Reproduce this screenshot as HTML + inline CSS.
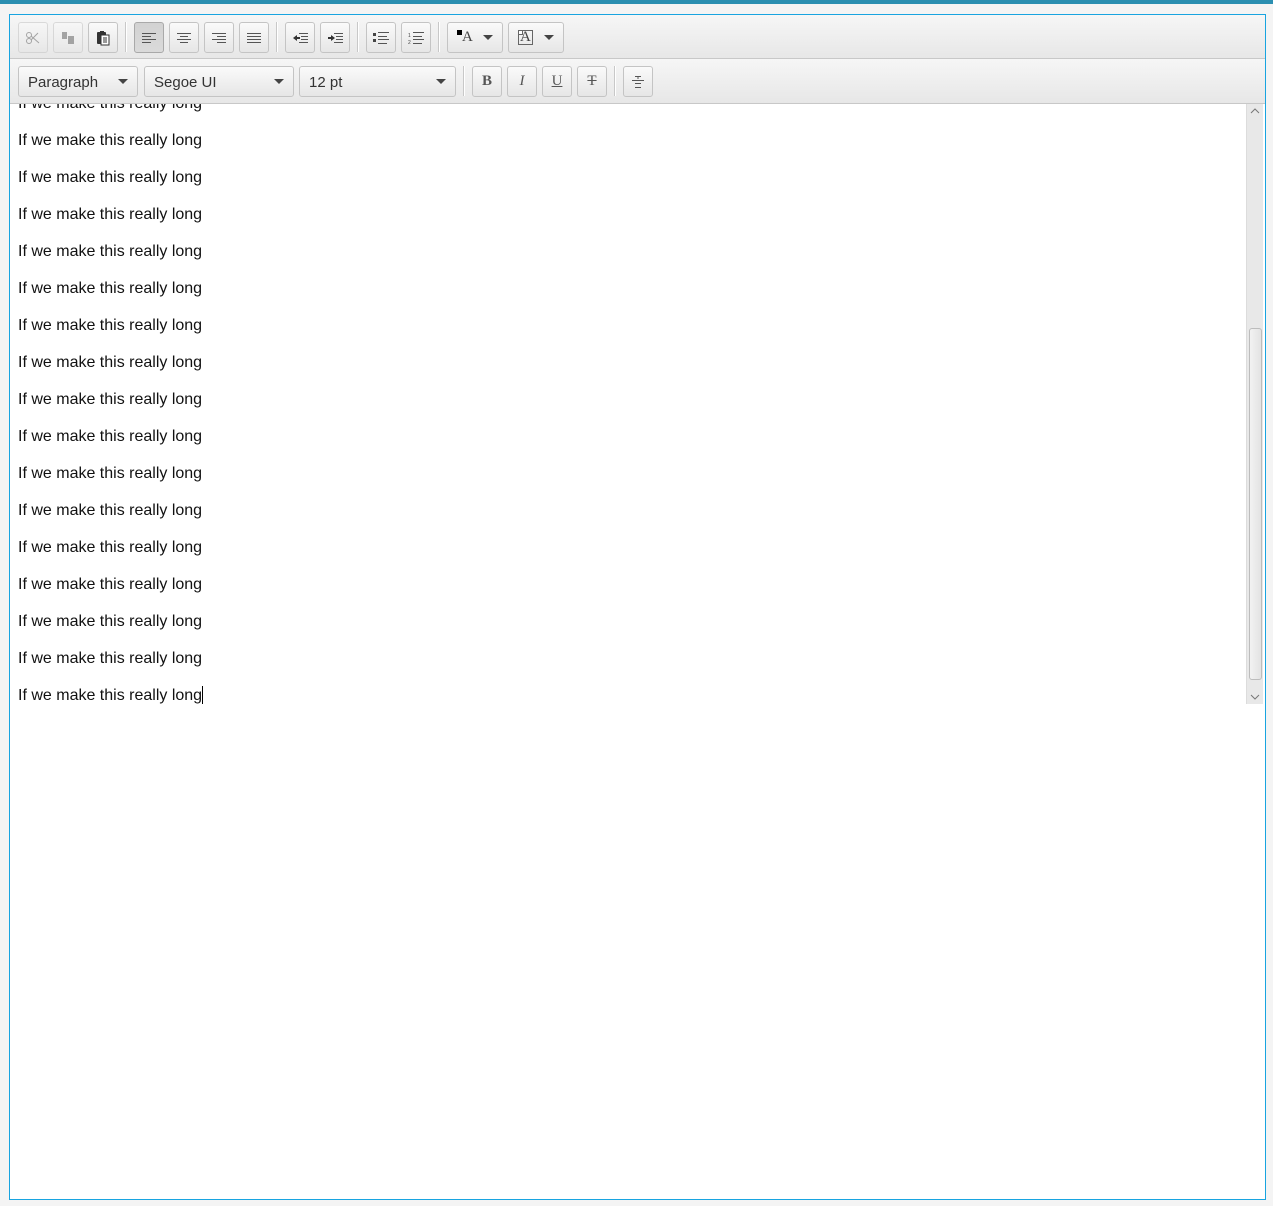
<!DOCTYPE html>
<html><head><style>
*{margin:0;padding:0;box-sizing:border-box}
body{width:1273px;height:1206px;background:#f4f4f4;position:relative;overflow:hidden;font-family:"Liberation Sans",sans-serif}
.top{position:absolute;left:0;top:0;width:1273px;height:4px;background:#2b8fb1}
.bg{position:absolute;left:9px;top:14px;width:1257px;height:1186px;background:#fff}
.frame{position:absolute;left:9px;top:14px;width:1257px;height:1186px;border:1px solid #18a4e0;z-index:10;pointer-events:none}
.tb{position:absolute;left:10px;width:1255px;background:linear-gradient(#f6f6f6,#e7e7e7);border-bottom:1px solid #c8c8c8}
.b{position:absolute;height:31px;border:1px solid #c4c4c4;border-radius:3px;background:linear-gradient(#fafafa,#e6e6e6);display:flex;align-items:center;justify-content:center;font-family:"Liberation Serif",serif;font-size:15px;color:#555}
.b.p{background:linear-gradient(#d2d2d2,#dadada);border-color:#a9a9a9}
.b.d{opacity:.55}
.sep{position:absolute;width:2px;height:30px;border-left:1px solid #c8c8c8;border-right:1px solid #fff}
.c{position:absolute;height:31px;border:1px solid #c4c4c4;border-radius:3px;background:linear-gradient(#fafafa,#e6e6e6);font-size:15px;color:#333;padding-left:9px;line-height:31px}
.arr{position:absolute;width:0;height:0;border-left:5px solid transparent;border-right:5px solid transparent;border-top:5px solid #444}
.c .arr{right:9px;top:12px}
.ln{position:absolute;left:8px;font-size:16px;color:#111;line-height:20px;white-space:nowrap}
.lines{position:absolute;left:10px;top:104px;width:1236px;height:600px;overflow:hidden}
.sb{position:absolute;left:1246px;top:104px;width:17px;height:600px;background:#e8e8e8;border-left:1px solid #dcdcdc}
.th{position:absolute;left:2px;top:224px;width:13px;height:352px;border:1px solid #bcbcbc;border-radius:3px;background:linear-gradient(90deg,#f2f2f2,#e3e3e3)}
</style></head><body>
<div class="top"></div>
<div class="bg"></div>
<div class="tb" style="top:15px;height:44px"></div>
<div class="tb" style="top:59px;height:45px"></div>

<div class="b d" style="left:18px;top:22px;width:30px"><svg width="16" height="14"><circle cx="4" cy="4" r="2.5" fill="none" stroke="#666"/><circle cx="4" cy="10" r="2.5" fill="none" stroke="#666"/><path d="M6 5L14 12M6 9L13 2" stroke="#666"/></svg></div>
<div class="b d" style="left:53px;top:22px;width:30px"><svg width="14" height="14"><rect x="1" y="1" width="5" height="7" fill="#666"/><rect x="7" y="5" width="6" height="8" fill="#666"/></svg></div>
<div class="b" style="left:88px;top:22px;width:30px"><svg width="14" height="16"><rect x="1" y="2" width="9" height="12" rx="1" fill="#333"/><rect x="4" y="1" width="4" height="3" fill="#333"/><rect x="5" y="5" width="8" height="10" fill="#fff" stroke="#333"/><path d="M7 8h4M7 10h4M7 12h4" stroke="#333"/></svg></div>
<div class="sep" style="left:125px;top:22px"></div>
<div class="b p" style="left:134px;top:22px;width:30px"><svg width="14" height="10"><path d="M0 .5h14M0 3.5h9M0 6.5h14M0 9.5h9" stroke="#555"/></svg></div>
<div class="b" style="left:169px;top:22px;width:30px"><svg width="14" height="10"><path d="M0 .5h14M3 3.5h8M0 6.5h14M3 9.5h8" stroke="#555"/></svg></div>
<div class="b" style="left:204px;top:22px;width:30px"><svg width="14" height="10"><path d="M0 .5h14M5 3.5h9M0 6.5h14M5 9.5h9" stroke="#555"/></svg></div>
<div class="b" style="left:239px;top:22px;width:30px"><svg width="14" height="10"><path d="M0 .5h14M0 3.5h14M0 6.5h14M0 9.5h14" stroke="#555"/></svg></div>
<div class="sep" style="left:276px;top:22px"></div>
<div class="b" style="left:285px;top:22px;width:30px"><svg width="16" height="10"><path d="M7 .5h9M9 3.5h7M9 6.5h7M7 9.5h9" stroke="#555"/><path d="M1 5l4-3v6z" fill="#333"/><path d="M4 5h4" stroke="#333" stroke-width="2"/></svg></div>
<div class="b" style="left:320px;top:22px;width:30px"><svg width="16" height="10"><path d="M7 .5h9M9 3.5h7M9 6.5h7M7 9.5h9" stroke="#555"/><path d="M8 5l-4-3v6z" fill="#333"/><path d="M1 5h4" stroke="#333" stroke-width="2"/></svg></div>
<div class="sep" style="left:357px;top:22px"></div>
<div class="b" style="left:366px;top:22px;width:30px"><svg width="16" height="12"><rect x="0" y="1" width="3" height="3" fill="#444"/><rect x="0" y="7" width="3" height="3" fill="#444"/><path d="M5 .5h11M5 4.5h9M5 7.5h11M5 11.5h9" stroke="#555"/></svg></div>
<div class="b" style="left:401px;top:22px;width:30px"><svg width="16" height="12"><text x="0" y="5" font-size="5" fill="#444" font-family="Liberation Sans">1</text><text x="0" y="12" font-size="5" fill="#444" font-family="Liberation Sans">2</text><path d="M5 .5h11M5 4.5h9M5 7.5h11M5 11.5h9" stroke="#555"/></svg></div>
<div class="sep" style="left:438px;top:22px"></div>
<div class="b" style="left:447px;top:22px;width:56px;justify-content:flex-start;padding-left:9px"><span style="display:inline-block;width:5px;height:5px;background:#000;margin-top:-10px"></span><span style="color:#444">A</span><span class="arr" style="right:9px;top:12px"></span></div>
<div class="b" style="left:508px;top:22px;width:56px;justify-content:flex-start;padding-left:9px"><span style="display:inline-block;border:1px solid #666;padding:0 1px;line-height:13px;position:relative;color:#444">A<span style="position:absolute;left:-1px;top:-1px;width:5px;height:5px;border:1px solid #666;background:#fff"></span></span><span class="arr" style="right:9px;top:12px"></span></div>

<div class="c" style="left:18px;top:66px;width:120px">Paragraph<span class="arr"></span></div>
<div class="c" style="left:144px;top:66px;width:150px">Segoe UI<span class="arr"></span></div>
<div class="c" style="left:299px;top:66px;width:157px">12 pt<span class="arr"></span></div>
<div class="sep" style="left:463px;top:66px"></div>
<div class="b" style="left:472px;top:66px;width:30px;font-weight:bold">B</div>
<div class="b" style="left:507px;top:66px;width:30px;font-style:italic">I</div>
<div class="b" style="left:542px;top:66px;width:30px;text-decoration:underline">U</div>
<div class="b" style="left:577px;top:66px;width:30px;text-decoration:line-through">T</div>
<div class="sep" style="left:614px;top:66px"></div>
<div class="b" style="left:623px;top:66px;width:30px"><svg width="12" height="14"><path d="M3 1.5h6M0 5.5h12M3 8.5h6M3 12.5h6" stroke="#555"/><path d="M6 2v2" stroke="#555"/></svg></div>

<div class="lines">
<div class="ln" style="top:-10px">If we make this really long</div>
<div class="ln" style="top:27px">If we make this really long</div>
<div class="ln" style="top:64px">If we make this really long</div>
<div class="ln" style="top:101px">If we make this really long</div>
<div class="ln" style="top:138px">If we make this really long</div>
<div class="ln" style="top:175px">If we make this really long</div>
<div class="ln" style="top:212px">If we make this really long</div>
<div class="ln" style="top:249px">If we make this really long</div>
<div class="ln" style="top:286px">If we make this really long</div>
<div class="ln" style="top:323px">If we make this really long</div>
<div class="ln" style="top:360px">If we make this really long</div>
<div class="ln" style="top:397px">If we make this really long</div>
<div class="ln" style="top:434px">If we make this really long</div>
<div class="ln" style="top:471px">If we make this really long</div>
<div class="ln" style="top:508px">If we make this really long</div>
<div class="ln" style="top:545px">If we make this really long</div>
<div class="ln" style="top:582px">If we make this really long<span style="display:inline-block;width:1px;height:18px;background:#000;vertical-align:-4px"></span></div>
</div>
<div class="sb"><svg style="position:absolute;left:3px;top:4px" width="10" height="6"><path d="M1 5l4-4 4 4" fill="none" stroke="#777"/></svg><div class="th"></div><svg style="position:absolute;left:3px;top:590px" width="10" height="6"><path d="M1 1l4 4 4-4" fill="none" stroke="#777"/></svg></div>
<div class="frame"></div>
</body></html>
